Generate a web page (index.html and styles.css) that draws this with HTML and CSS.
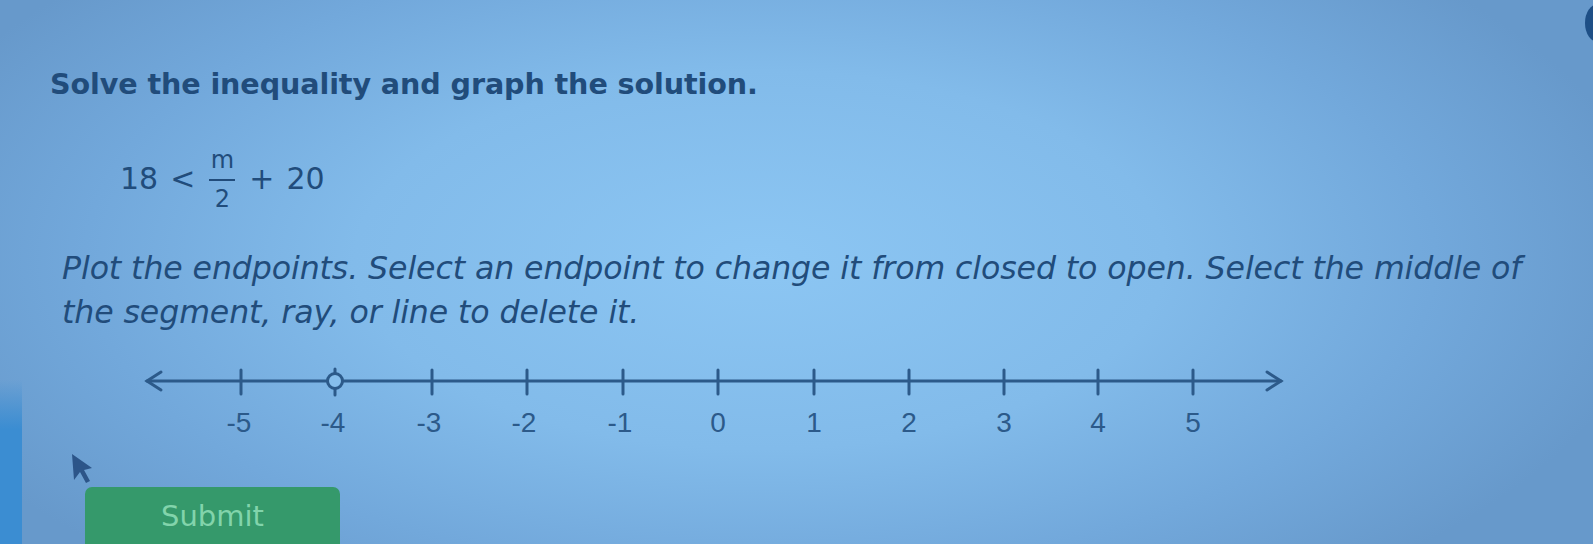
FILE: index.html
```html
<!DOCTYPE html>
<html>
<head>
<meta charset="utf-8">
<link rel="stylesheet" href="styles.css">
</head>
<body>
<div class="stripe"></div>
<div class="corner-dot"></div>
<main class="page">
  <h1 class="title">Solve the inequality and graph the solution.</h1>
  <div class="equation">
    <span class="num">18</span>
    <span class="op">&lt;</span>
    <span class="frac"><span class="top">m</span><span class="bar"></span><span class="bot">2</span></span>
    <span class="op">+</span>
    <span class="num">20</span>
  </div>
  <p class="instructions">Plot the endpoints. Select an endpoint to change it from closed to open. Select the middle of the segment, ray, or line to delete it.</p>
  <svg class="numline" width="1200" height="92" viewBox="140 350 1200 92">
    <g stroke="#2c5a8a" stroke-width="3" fill="none" stroke-linecap="round">
      <line x1="147" y1="376" x2="1281" y2="376"/>
      <polyline points="161,367 147,376 161,385"/>
      <polyline points="1267,367 1281,376 1267,385"/>
      <line x1="241" y1="365" x2="241" y2="389"/>
      <line x1="335" y1="364" x2="335" y2="390"/>
      <line x1="432" y1="365" x2="432" y2="389"/>
      <line x1="527" y1="365" x2="527" y2="389"/>
      <line x1="623" y1="365" x2="623" y2="389"/>
      <line x1="718" y1="365" x2="718" y2="389"/>
      <line x1="814" y1="365" x2="814" y2="389"/>
      <line x1="909" y1="365" x2="909" y2="389"/>
      <line x1="1004" y1="365" x2="1004" y2="389"/>
      <line x1="1098" y1="365" x2="1098" y2="389"/>
      <line x1="1193" y1="365" x2="1193" y2="389"/>
    </g>
    <circle cx="335" cy="376" r="7.5" fill="#86beec" stroke="#2c5a8a" stroke-width="3"/>
    <g class="labels" fill="#2c5a8a" text-anchor="middle">
      <text x="239" y="427">-5</text>
      <text x="333" y="427">-4</text>
      <text x="429" y="427">-3</text>
      <text x="524" y="427">-2</text>
      <text x="620" y="427">-1</text>
      <text x="718" y="427">0</text>
      <text x="814" y="427">1</text>
      <text x="909" y="427">2</text>
      <text x="1004" y="427">3</text>
      <text x="1098" y="427">4</text>
      <text x="1193" y="427">5</text>
    </g>
  </svg>
  <div class="cursor-row">
    <svg class="cursor" width="24" height="34" viewBox="0 0 24 34">
      <path d="M2 2 L4 28 L10 20 L16 31 L20 29 L14 18 L22 16 Z" fill="#2c5589"/>
    </svg>
  </div>
  <button class="submit">Submit</button>
</main>
</body>
</html>
```
FILE: styles.css
```css
html, body {
  margin: 0;
  padding: 0;
}
body {
  width: 1593px;
  height: 544px;
  overflow: hidden;
  position: relative;
  background:
    radial-gradient(ellipse 900px 420px at 760px 260px, #8cc6f3 0%, #82bbea 45%, #72a8db 75%, #6799cb 100%);
  font-family: "DejaVu Sans", Verdana, sans-serif;
  color: #214c7b;
}
.stripe {
  position: absolute;
  left: 0;
  top: 380px;
  width: 22px;
  height: 164px;
  background: linear-gradient(to bottom, rgba(60,140,210,0), #3b8dd2 30%, #3b8dd2);
}
.corner-dot {
  position: absolute;
  right: -18px;
  top: 4px;
  width: 26px;
  height: 38px;
  border-radius: 50%;
  background: #1e4f86;
}
.page {
  padding: 66px 0 0 50px;
}
.title {
  margin: 0;
  font-size: 28.6px;
  font-weight: bold;
  line-height: 36px;
  letter-spacing: -0.1px;
}
.equation {
  display: flex;
  align-items: center;
  margin: 42px 0 0 70px;
  font-size: 30px;
  gap: 12px;
  height: 68px;
}
.frac {
  display: inline-flex;
  flex-direction: column;
  align-items: center;
  width: 30px;
  font-size: 24px;
  line-height: 22px;
  padding-top: 2px;
}
.frac .bar {
  width: 26px;
  height: 2px;
  background: #214c7b;
  margin: 8px 0 7px;
}
.instructions {
  margin: 34px 0 0 12px;
  width: 1475px;
  font-size: 31.6px;
  font-style: italic;
  line-height: 44px;
  letter-spacing: -0.1px;
}
.numline {
  display: block;
  margin: 21px 0 0 90px;
}
.labels text {
  font-family: "Liberation Sans", Arial, sans-serif;
  font-size: 28px;
}
.cursor-row {
  height: 35px;
  margin: 0 0 0 20px;
}
.cursor {
  display: block;
  margin-top: 5px;
}
.submit {
  display: block;
  margin: 0 0 0 35px;
  width: 255px;
  height: 70px;
  border: none;
  border-radius: 7px 7px 0 0;
  background: #35996b;
  color: #82d4ab;
  font-family: "DejaVu Sans", Verdana, sans-serif;
  font-size: 29px;
  padding: 0 0 12px;
}
```
